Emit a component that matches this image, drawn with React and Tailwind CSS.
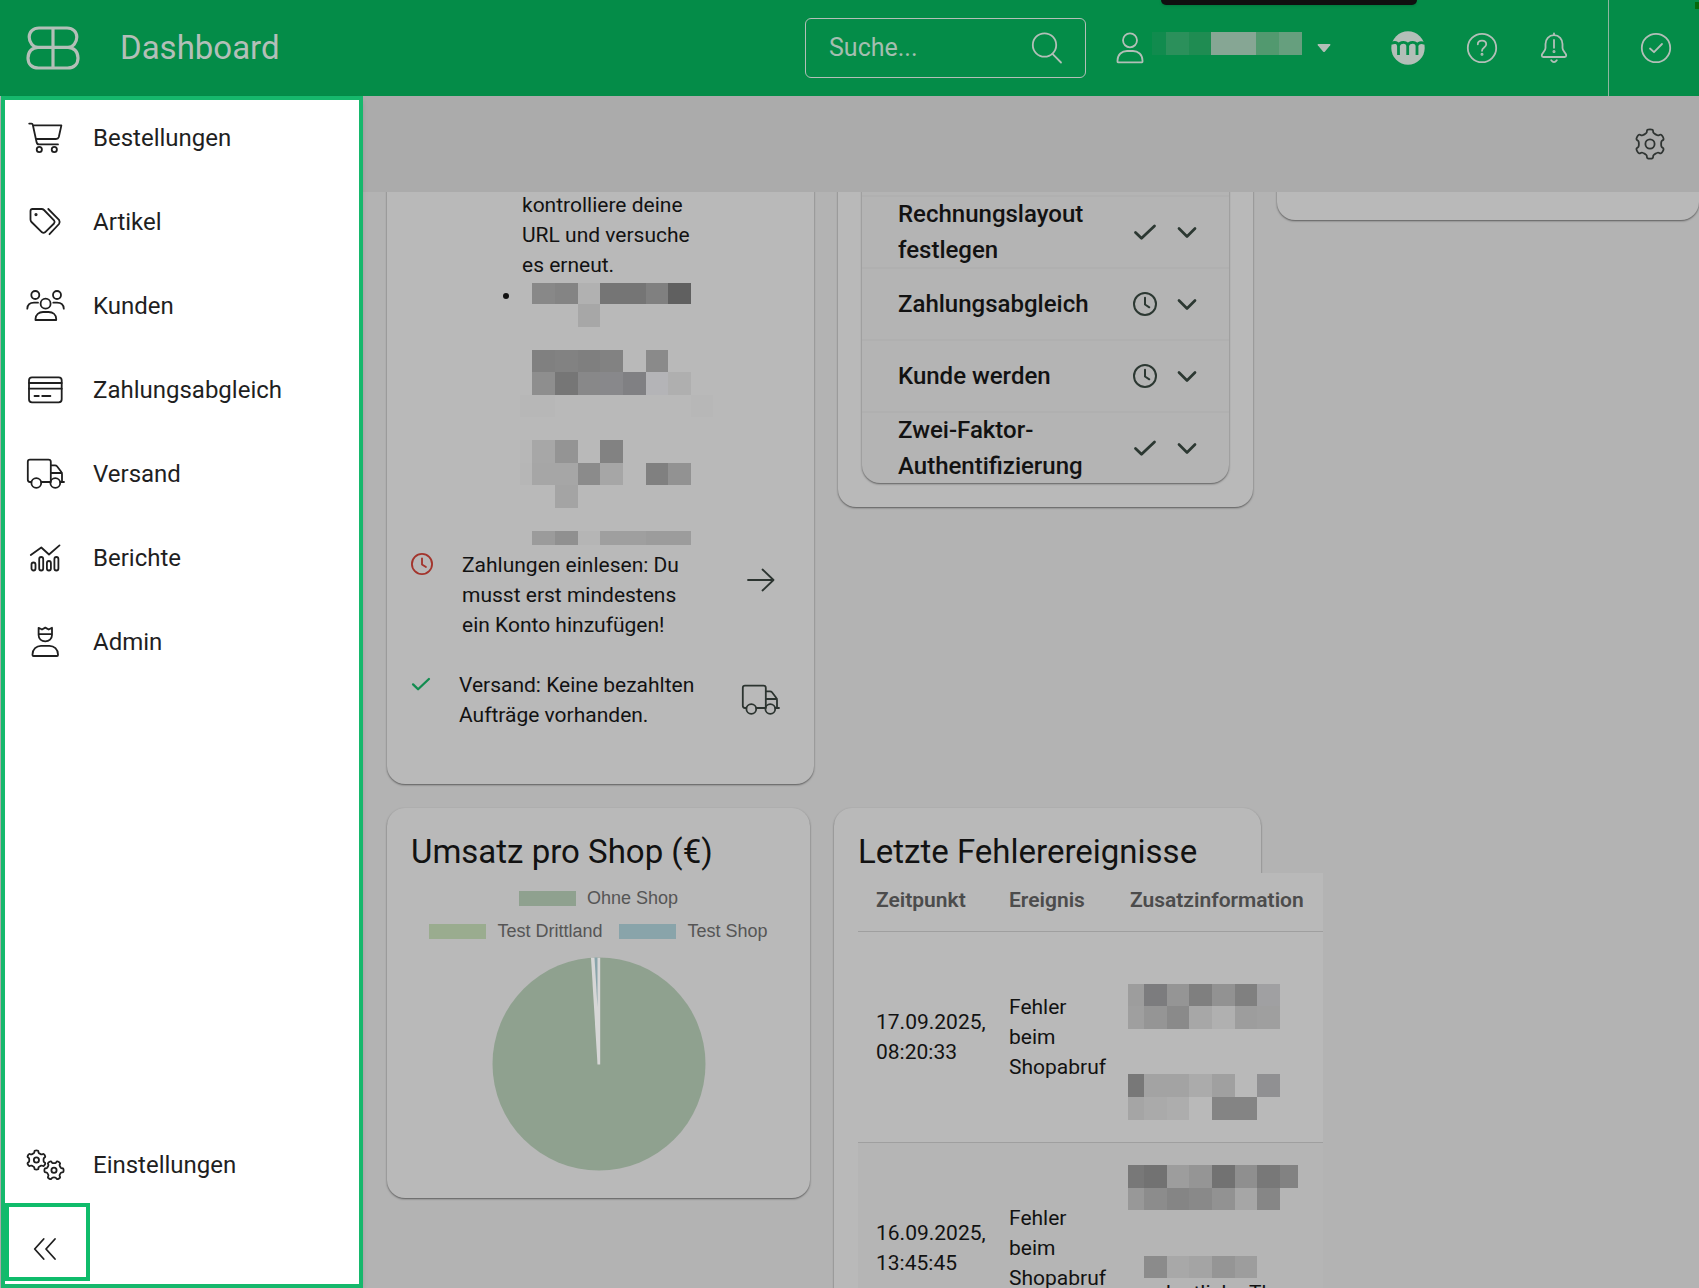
import React from "react";

const P = { fill: "none", stroke: "currentColor", strokeLinecap: "round", strokeLinejoin: "round" };

function gearPath(cx, cy, R, r, rotation) {
  const points = [];
  for (let i = 0; i < 6; i += 1) {
    const base = i * 60 + rotation - 90;
    [[-24, r], [-15, r * 1.06], [-13, R * 0.98], [-7, R * 1.03], [7, R * 1.03], [13, R * 0.98], [15, r * 1.06], [24, r]].forEach(([a, rad]) => {
      const t = ((base + a) * Math.PI) / 180;
      points.push([cx + rad * Math.cos(t), cy + rad * Math.sin(t)]);
    });
  }
  const mid = (a, b) => `${((a[0] + b[0]) / 2).toFixed(2)} ${((a[1] + b[1]) / 2).toFixed(2)}`;
  const n = points.length;
  let d = `M${mid(points[n - 1], points[0])}`;
  points.forEach((p, i) => {
    d += ` Q${p[0].toFixed(2)} ${p[1].toFixed(2)} ${mid(p, points[(i + 1) % n])}`;
  });
  return `${d}Z`;
}

function Icon({ size = "size-10", box = "0 0 40 40", width = 1.8, children }) {
  return (
    <svg className={`${size} shrink-0`} viewBox={box} {...P} strokeWidth={width} aria-hidden="true">
      {children}
    </svg>
  );
}

const Truck = () => (
  <Icon>
    <path d="M6.3 28H5Q2.8 28 2.8 25.8V7.8Q2.8 5.6 5 5.6H23.5Q25.8 5.6 25.8 7.8V28M16.3 28H25.3M25.8 11.3H30Q31.2 11.3 32 12.3L36 17.5Q37 18.8 37 20V28M26 19H37M35.3 28H39" />
    <circle cx="11.3" cy="29" r="4.9" />
    <circle cx="30.3" cy="29" r="4.9" />
  </Icon>
);

const Cart = () => (
  <Icon>
    <path d="M4.2 5.6H6.5Q7.6 5.6 7.9 7.2L11.6 24.2Q12.1 26.4 14 26.4H33M8 7.4H36.4L33.8 19Q33.2 21 31 21H11" />
    <circle cx="14.3" cy="31.5" r="2.6" />
    <circle cx="29.3" cy="31.5" r="2.6" />
  </Icon>
);

const Tags = () => (
  <Icon>
    <path d="M5.5 9Q5.5 7 7.5 7H16.5Q18 7 19 8L29 18.3Q30.3 20 29 21.5L20 30.3Q18.5 31.5 17 30.3L6.5 20Q5.5 19 5.5 17.5ZM23.3 7L34 17.8Q35.3 20 34 22L24.5 32.2" />
    <circle cx="11" cy="12.6" r="0.7" />
  </Icon>
);

const People = () => (
  <Icon>
    <circle cx="10.3" cy="9" r="4" />
    <circle cx="32" cy="9" r="4" />
    <circle cx="20.6" cy="17.7" r="5" />
    <path d="M10.5 34V33C10.5 28.5 14 26 18 26H23.5C28 26 31.2 28.5 31.2 33V34ZM2.3 22.7C2.5 19 5 16.7 9 16.7H13M28.3 16.7H32C36 16.7 38.6 19 38.8 22.7" />
  </Icon>
);

const CreditCard = () => (
  <Icon>
    <rect x="4" y="7.3" width="32.7" height="25" rx="3" />
    <path d="M4 13H36.7M4 18.7H36.7M9.5 26H13.8M17.2 26H25.4" />
  </Icon>
);

const Chart = () => (
  <Icon>
    <path d="M5.8 17L16.3 9.5L24 16.5L34.5 7.4" />
    <rect x="6.5" y="24.5" width="4" height="8" rx="2" />
    <rect x="14.2" y="19" width="4" height="13.5" rx="2" />
    <rect x="21.9" y="23" width="4" height="9.5" rx="2" />
    <rect x="29.4" y="19" width="4" height="13.5" rx="2" />
  </Icon>
);

const King = () => (
  <Icon>
    <path d="M13.6 5.8L17 7.5L20.3 5.6L23.7 7.5L27 5.8V13C27 16.8 24 19.3 20.3 19.3C16.5 19.3 13.6 16.8 13.6 13ZM13.6 12.2H27" />
    <path d="M7.5 33V32.5C7.5 27 11.5 23.8 16 23.8H24.5C29 23.8 33 27 33 32.5V33Q33 34 32 34H8.5Q7.5 34 7.5 33Z" />
  </Icon>
);

const Gears = () => (
  <Icon>
    <path d={gearPath(11.4, 15, 9.4, 7.2, 0)} />
    <circle cx="11.4" cy="15" r="2.6" />
    <path d={gearPath(29, 25.3, 9.4, 7.2, 30)} />
    <circle cx="29" cy="25.3" r="2.6" />
  </Icon>
);

const Check = ({ size }) => (
  <Icon size={size} box="0 0 24 24" width={2.8}>
    <path d="M2.5 12.5L8.5 18.3L21.5 6" />
  </Icon>
);

const Clock = ({ size }) => (
  <Icon size={size} box="0 0 24 24" width={2}>
    <circle cx="12" cy="12" r="11" />
    <path d="M12 5.8V12.5L16.3 15.3" />
  </Icon>
);

/* Redacted text: a pixelated block, each cell is [x, y, width, height, colour]. */
function Mosaic({ width, height, cells, className }) {
  return (
    <svg className={className} width={width} height={height} viewBox={`0 0 ${width} ${height}`} shapeRendering="crispEdges" aria-hidden="true">
      {cells.map(([x, y, w, h, c], i) => (
        <rect key={i} x={x} y={y} width={w} height={h} fill={c} />
      ))}
    </svg>
  );
}

const nav = [
  ["Bestellungen", Cart],
  ["Artikel", Tags],
  ["Kunden", People],
  ["Zahlungsabgleich", CreditCard],
  ["Versand", Truck],
  ["Berichte", Chart],
  ["Admin", King],
];

const nameCells = [
  [0, 0, 14, 23, "#118b4e"], [14, 0, 23, 23, "#2b905b"], [37, 0, 22, 23, "#1f8c52"], [59, 0, 45, 23, "#86a694"],
  [104, 0, 23, 23, "#52996f"], [127, 0, 23, 23, "#669f7e"],
];

const listCells = [
  [12, 3, 23, 21, "#888888"], [35, 3, 23, 21, "#848484"], [58, 3, 22, 21, "#b1b1b1"], [80, 3, 46, 21, "#757575"], [126, 3, 22, 21, "#808080"], [148, 3, 23, 21, "#606060"],
  [58, 24, 22, 23, "#a7a7a7"],
  [12, 70, 23, 22, "#808080"], [35, 70, 23, 22, "#828282"], [58, 70, 22, 22, "#7f7f7f"], [80, 70, 23, 22, "#828282"], [126, 70, 22, 22, "#8a8a8a"],
  [12, 92, 23, 23, "#8e8e8e"], [35, 92, 23, 23, "#767676"], [58, 92, 22, 23, "#888889"], [80, 92, 23, 23, "#88888b"], [103, 92, 23, 23, "#808083"], [126, 92, 22, 23, "#b4b4b7"], [148, 92, 23, 23, "#afafaf"],
  [0, 115, 35, 22, "#b7b7b7"], [171, 115, 22, 22, "#b7b7b7"],
  [0, 160, 12, 23, "#b7b7b7"], [12, 160, 23, 23, "#a7a7a7"], [35, 160, 23, 23, "#949494"], [80, 160, 23, 23, "#828282"],
  [0, 183, 12, 22, "#b6b6b6"], [12, 183, 46, 22, "#a6a6a6"], [58, 183, 22, 22, "#8b8b8b"], [80, 183, 23, 22, "#a6a6a6"], [126, 183, 22, 22, "#808080"], [148, 183, 23, 22, "#929292"],
  [35, 205, 23, 23, "#a4a4a4"],
  [12, 251, 23, 14, "#9b9b9b"], [35, 251, 23, 14, "#909090"], [58, 251, 22, 14, "#b5b5b5"], [80, 251, 46, 14, "#9f9f9f"], [126, 251, 45, 14, "#9c9c9c"],
];

const errorCells1 = [
  [0, 0, 16, 22, "#9d9d9d"], [16, 0, 23, 22, "#7c7c7e"], [39, 0, 22, 22, "#959595"], [61, 0, 23, 22, "#7f7f7f"], [84, 0, 23, 22, "#929292"], [107, 0, 22, 22, "#808080"], [129, 0, 23, 22, "#a0a0a2"],
  [0, 22, 16, 23, "#9f9f9f"], [16, 22, 23, 23, "#959595"], [39, 22, 22, 23, "#8a8a8a"], [61, 22, 23, 23, "#a7a7a7"], [84, 22, 23, 23, "#b0b0b0"], [107, 22, 22, 23, "#9d9d9d"], [129, 22, 23, 23, "#9f9f9f"],
  [0, 90, 16, 23, "#787878"], [16, 90, 45, 23, "#a3a3a3"], [61, 90, 23, 23, "#ababab"], [84, 90, 23, 23, "#a0a0a0"], [129, 90, 23, 23, "#909092"],
  [0, 113, 16, 23, "#a5a5a5"], [16, 113, 23, 23, "#aaaaaa"], [39, 113, 22, 23, "#adadad"], [84, 113, 45, 23, "#848484"],
];

const errorCells2 = [
  [0, 0, 16, 23, "#787878"], [16, 0, 23, 23, "#727272"], [39, 0, 22, 23, "#9d9d9d"], [61, 0, 23, 23, "#959595"], [84, 0, 23, 23, "#727272"], [107, 0, 22, 23, "#8f8f8f"], [129, 0, 23, 23, "#787878"], [152, 0, 18, 23, "#828282"],
  [0, 23, 16, 22, "#989898"], [16, 23, 23, 22, "#8c8c8c"], [39, 23, 22, 22, "#858585"], [61, 23, 23, 22, "#898989"], [84, 23, 23, 22, "#929292"], [107, 23, 22, 22, "#a6a6a6"], [129, 23, 23, 22, "#868686"],
  [16, 91, 23, 22, "#8b8b8b"], [39, 91, 22, 22, "#a8a8a8"], [61, 91, 23, 22, "#a4a4a4"], [84, 91, 23, 22, "#959595"], [107, 91, 22, 22, "#9d9d9d"],
];

const steps = [
  ["Rechnungslayout festlegen", true],
  ["Zahlungsabgleich", false],
  ["Kunde werden", false],
  ["Zwei-Faktor-Authentifizierung", true],
];

function Header() {
  return (
    <header className="relative flex h-24 shrink-0 items-center bg-[#048c48] text-[#b3bfb8]">
      <svg className="ml-[26px] h-[46px] w-[54px] shrink-0" viewBox="0 0 54 46" {...P} strokeWidth="3.2" role="img" aria-label="Logo">
        <path d="M27 3H13C7 3 3.2 7 3.2 12C3.2 17.5 7 22.3 12 22.3C6 22.3 2 27 2 33C2 39 6 43 12.5 43H41.5C48 43 52 39 52 33C52 27 48 22.3 42 22.3C47 22.3 50.8 17.5 50.8 12C50.8 7 47 3 41 3H27V43M11 22.3H43" />
      </svg>
      <h1 className="ml-10 flex-1 text-[33px] leading-[38px]">Dashboard</h1>
      <div className="flex h-[60px] w-[281px] items-center rounded-md border border-[#b3bfb8] pr-[22px] pl-[23px]">
        <input type="search" aria-label="Suche" placeholder="Suche..." className="min-w-0 flex-1 bg-transparent text-[25px] outline-none placeholder:text-[#a4beb0]" />
        <button type="button" aria-label="Suchen">
          <Icon size="size-8" box="0 0 32 32" width={1.8}>
            <circle cx="13.5" cy="13" r="11.7" />
            <path d="M21.5 21.8L30 30.5" />
          </Icon>
        </button>
      </div>
      <button type="button" aria-label="Benutzerkonto" className="ml-[30px] flex items-center">
        <Icon size="h-8 w-7" box="0 0 28 32" width={1.8}>
          <circle cx="14" cy="8.3" r="7" />
          <path d="M1.5 29.8V28.5C1.5 22.5 6 19 11 19H17C22 19 26.5 22.5 26.5 28.5V29.8Q26.5 30.3 26 30.3H2Q1.5 30.3 1.5 29.8Z" />
        </Icon>
        <Mosaic className="mb-2.5 ml-2 shrink-0" width={150} height={23} cells={nameCells} />
        <svg className="ml-[15px] h-2.5 w-3.5" viewBox="0 0 14 10" fill="currentColor" aria-hidden="true">
          <path d="M1.2 1H12.8Q14 1.2 13.2 2.3L8 8.6Q7 9.6 6 8.6L0.8 2.3Q0 1.2 1.2 1Z" />
        </svg>
      </button>
      <div className="mr-[37px] ml-[60px] flex gap-[38px]">
        <button type="button" aria-label="Mitteilungen" className="mr-0.5">
          <svg className="size-[34px]" viewBox="0 0 34 34" aria-hidden="true">
            <circle cx="17" cy="17" r="16.7" fill="currentColor" />
            <path
              d="M0 12.5C3.5 10.8 7.5 11 7.5 15.5V24M7.5 14.5C9 10.5 16.7 10 16.7 15.5V24M16.7 14.5C18.2 10.5 26 10 26 15.5V24M26 14.5C27.5 11 31 11.3 34 12.5"
              fill="none"
              stroke="#048c48"
              strokeWidth="2.8"
            />
          </svg>
        </button>
        <button type="button" aria-label="Hilfe">
          <Icon size="size-[34px]" box="0 0 34 34" width={1.8}>
            <circle cx="17" cy="17" r="14.2" />
            <path d="M12.8 13.3C12.8 10.8 14.5 9.6 17 9.6C19.5 9.6 21.2 11.1 21.2 13.2C21.2 16.6 17 16.3 17 19.8" />
            <circle cx="17" cy="23.2" r="0.6" />
          </Icon>
        </button>
        <button type="button" aria-label="Benachrichtigungen">
          <Icon size="size-[34px]" box="0 0 34 34" width={1.8}>
            <path d="M17 2.3V4M17 4.2C11.8 4.2 8.5 8.2 8.5 13V17C8.5 20.5 4.8 21.5 4.8 24.5Q4.8 26 6.3 26H27.7Q29.2 26 29.2 24.5C29.2 21.5 25.5 20.5 25.5 17V13C25.5 8.2 22.2 4.2 17 4.2ZM14.2 29.3Q17 33 19.8 29.3M17 9V16.8" />
            <circle cx="17" cy="20.6" r="0.6" />
          </Icon>
        </button>
      </div>
      <button type="button" aria-label="Aufgaben" className="flex h-full w-[91px] items-center justify-center border-l border-[#8fb5a0] pl-1">
        <Icon size="size-[34px]" box="0 0 34 34" width={1.8}>
          <circle cx="17" cy="17" r="14.2" />
          <path d="M11 17.5L15 21.2L23 13" />
        </Icon>
      </button>
      <div className="absolute top-0 right-[282px] h-[5px] w-64 rounded-b-lg bg-[#101010] shadow" />
      <div className="absolute top-0.5 right-0 h-[7px] w-1 bg-[#046b0c]" />
    </header>
  );
}

function Sidebar() {
  return (
    <aside className="z-10 ml-px flex w-[362px] shrink-0 flex-col border-4 border-[#16b86c] bg-white text-[#1f1f1f] shadow-md">
      <nav className="-mt-1 flex flex-1 flex-col">
        {nav.map(([label, Glyph]) => (
          <a key={label} href="#" className="flex h-[84px] items-center gap-7 pl-5 text-2xl">
            <Glyph />
            {label}
          </a>
        ))}
        <a href="#" className="mt-auto flex h-[76px] items-center gap-7 pl-5 text-2xl">
          <Gears />
          Einstellungen
        </a>
      </nav>
      <button type="button" aria-label="Menü einklappen" className="mb-[3px] flex h-[78px] w-[85px] items-center border-4 border-[#0fbc6b] pt-3.5 pl-3">
        <Icon>
          <path d="M22.7 10L13.7 20L22.7 30M34 10L25 20L34 30" />
        </Icon>
      </button>
    </aside>
  );
}

const card = "rounded-[18px] bg-[#b9b9b9] shadow-[0_1px_2px_rgba(0,0,0,0.5)]";

function TaskCard() {
  return (
    <section className={`${card} px-6 pt-[22px] pb-[54px] text-[21px] leading-[30px]`}>
      <ul className="list-disc pl-[111px]">
        <li className="w-[180px] list-none">kontrolliere deine URL und versuche es erneut.</li>
        <li>
          <Mosaic className="-ml-0.5 inline-block align-top" width={193} height={265} cells={listCells} />
        </li>
      </ul>
      <div className="mt-[5px] flex items-start">
        <span className="mt-[3px] text-[#a3342c]"><Clock size="size-[22px]" /></span>
        <p className="ml-[29px] w-[230px]">Zahlungen einlesen: Du musst erst mindestens ein Konto hinzufügen!</p>
        <a href="#" aria-label="Zahlungen öffnen" className="mr-2.5 ml-auto flex h-[60px] items-center text-[#2c3430]">
          <Icon><path d="M8 20H33M22.5 9.5L33.5 20L22.5 30.5" /></Icon>
        </a>
      </div>
      <div className="mt-[30px] flex items-start">
        <span className="mt-1 text-[#128c50]"><Check size="size-5" /></span>
        <p className="ml-7 w-[250px]">Versand: Keine bezahlten Aufträge vorhanden.</p>
        <a href="#" aria-label="Versand öffnen" className="mr-2.5 ml-auto flex h-[60px] items-center text-[#2c3430]">
          <Truck />
        </a>
      </div>
    </section>
  );
}

function SetupCard() {
  return (
    <section className={`${card} px-6 pb-6`}>
      <div className="overflow-hidden rounded-b-[18px] bg-[#b4b4b4] pt-[27px] shadow-[0_1px_2px_rgba(0,0,0,0.5)]">
        {steps.map(([label, done]) => (
          <button key={label} type="button" className="flex h-[72px] w-full items-center border-t-2 border-[#b0b0b0] pr-[30px] pl-9 text-left text-2xl leading-9 font-medium">
            <span className="w-[210px]">{label}</span>
            <span className="ml-auto text-[#2c3832]">{done ? <Check size="size-6" /> : <Clock size="size-6" />}</span>
            <span className="ml-[18px] text-[#2c3832]">
              <Icon size="size-6" box="0 0 24 24" width={2.7}><path d="M4 8.5L12 16.5L20 8.5" /></Icon>
            </span>
          </button>
        ))}
      </div>
    </section>
  );
}

function Legend({ color, children }) {
  return (
    <span className="flex items-center gap-[11px]">
      <span className={`h-[15px] w-[57px] ${color}`} />
      {children}
    </span>
  );
}

function RevenueCard() {
  return (
    <section className={`${card} px-6 pt-[23px] pb-[27px]`}>
      <h2 className="text-[33px] leading-[42px]">Umsatz pro Shop (€)</h2>
      <div className="mt-[9px] flex flex-wrap justify-center gap-x-[17px] font-['Liberation_Sans',Arial,sans-serif] text-lg leading-[33px] text-[#555]">
        <span className="flex w-full justify-center"><Legend color="bg-[#8fa18f]">Ohne Shop</Legend></span>
        <Legend color="bg-[#9aac8f]">Test Drittland</Legend>
        <Legend color="bg-[#89a4aa]">Test Shop</Legend>
      </div>
      <svg className="mx-auto mt-[9px] size-[214px]" viewBox="0 0 214 214" role="img" aria-label="Umsatz pro Shop">
        <circle cx="107" cy="107" r="106.5" fill="#8fa18f" />
        <path d="M105.5 107.5L99 0.8H108.2V107.5Z" fill="#d6d6d6" />
        <path d="M105.5 50L102.5 0.5H105.5Z" fill="#89a4aa" />
      </svg>
    </section>
  );
}

function ErrorRow({ date, time, width, height, cells, mosaicClass, rest, tone }) {
  return (
    <tr className={`border-b border-[#9f9f9f] ${tone}`}>
      <td className="pr-2 pl-[18px]">{date}<br />{time}</td>
      <td className="px-3">Fehler beim Shopabruf</td>
      <td className="h-[211px] pl-2.5">
        <Mosaic className={mosaicClass} width={width} height={height} cells={cells} />
        {rest}
      </td>
    </tr>
  );
}

function ErrorCard() {
  return (
    <section className={`${card} h-[620px] px-6 pt-[23px]`}>
      <h2 className="text-[33px] leading-[42px]">Letzte Fehlerereignisse</h2>
      <table className="w-[465px] table-fixed bg-[#b9b9b9] text-[21px] leading-[30px]">
        <thead>
          <tr className="h-[58px] border-b border-[#9f9f9f] text-left align-top text-[#4c4c4c]">
            <th className="w-[139px] pt-3 pr-3 pl-[18px] font-semibold">Zeitpunkt</th>
            <th className="w-[121px] px-3 pt-3 font-semibold">Ereignis</th>
            <th className="pt-3 pl-3 font-semibold">Zusatzinformation</th>
          </tr>
        </thead>
        <tbody>
          <ErrorRow date="17.09.2025," time="08:20:33" width={170} height={136} cells={errorCells1} mosaicClass="mt-[30px]" tone="" />
          <ErrorRow
            date="16.09.2025,"
            time="13:45:45"
            width={170}
            height={113}
            cells={errorCells2}
            tone="bg-[#b5b5b5]"
            rest={<span className="block h-[52px] pl-3">ordentliche Th</span>}
          />
        </tbody>
      </table>
    </section>
  );
}

export default function App() {
  return (
    <div className="flex h-screen flex-col overflow-hidden bg-[#b3b3b3] font-[Roboto,sans-serif] text-[#121212]">
      <Header />
      <div className="flex min-h-0 flex-1">
        <Sidebar />
        <main className="flex min-w-0 flex-1 flex-col">
          <div className="z-1 flex h-24 shrink-0 items-center justify-end bg-[#ababab] pr-[29px]">
            <button type="button" aria-label="Dashboard anpassen" className="text-[#2f3432]">
              <Icon><path d={gearPath(20, 20, 14.4, 11.2, 0)} /><circle cx="20" cy="20" r="4.6" /></Icon>
            </button>
          </div>
          <div className="min-h-0 flex-1 overflow-hidden pl-6">
            <div className="-mt-6 grid grid-cols-[minmax(0,427fr)_minmax(0,415fr)_minmax(0,422fr)] items-start gap-x-6">
              <TaskCard />
              <SetupCard />
              <section className={`${card} h-[52px]`} />
            </div>
            <div className="mt-6 grid grid-cols-[minmax(0,423fr)_minmax(0,427fr)_minmax(0,414fr)] items-start gap-x-6">
              <RevenueCard />
              <ErrorCard />
            </div>
          </div>
        </main>
      </div>
    </div>
  );
}
